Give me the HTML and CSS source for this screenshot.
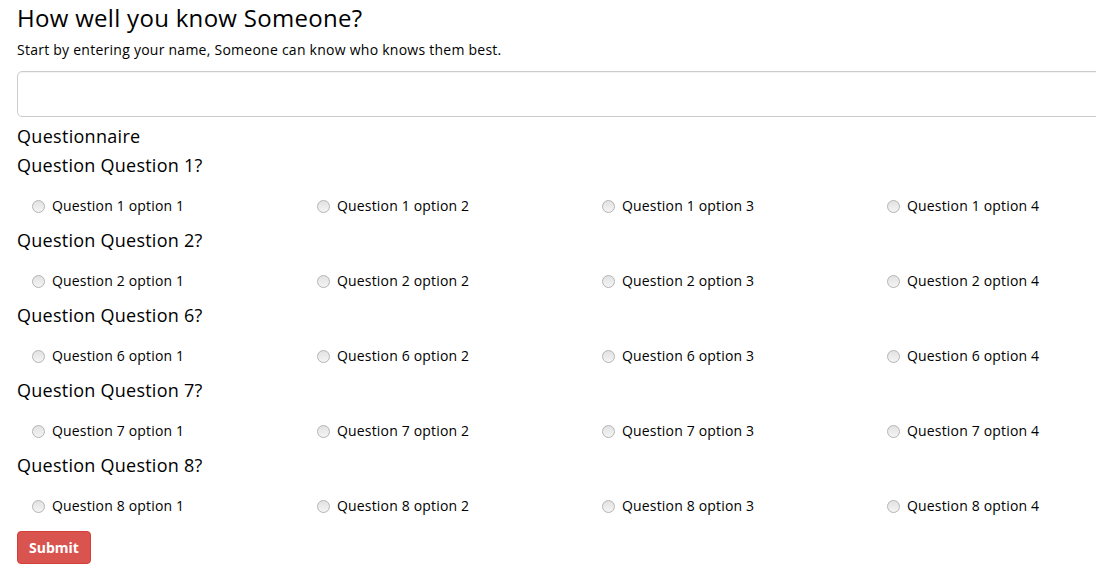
FILE: index.html
```html
<!DOCTYPE html>
<html lang="en">
<head>
<meta charset="utf-8">
<title>How well you know Someone?</title>
<link rel="stylesheet" href="styles.css">
</head>
<body>
<div class="page">
  <h1 class="title">How well you know Someone?</h1>
  <p class="subtitle">Start by entering your name, Someone can know who knows them best.</p>
  <input class="name-input" type="text">
  <h3 class="section">Questionnaire</h3>

  <div class="question">
    <h4 class="q-title">Question Question 1?</h4>
    <div class="options">
      <label class="option"><input type="radio" name="q1"><span>Question 1 option 1</span></label>
      <label class="option"><input type="radio" name="q1"><span>Question 1 option 2</span></label>
      <label class="option"><input type="radio" name="q1"><span>Question 1 option 3</span></label>
      <label class="option"><input type="radio" name="q1"><span>Question 1 option 4</span></label>
    </div>
  </div>

  <div class="question">
    <h4 class="q-title">Question Question 2?</h4>
    <div class="options">
      <label class="option"><input type="radio" name="q2"><span>Question 2 option 1</span></label>
      <label class="option"><input type="radio" name="q2"><span>Question 2 option 2</span></label>
      <label class="option"><input type="radio" name="q2"><span>Question 2 option 3</span></label>
      <label class="option"><input type="radio" name="q2"><span>Question 2 option 4</span></label>
    </div>
  </div>

  <div class="question">
    <h4 class="q-title">Question Question 6?</h4>
    <div class="options">
      <label class="option"><input type="radio" name="q6"><span>Question 6 option 1</span></label>
      <label class="option"><input type="radio" name="q6"><span>Question 6 option 2</span></label>
      <label class="option"><input type="radio" name="q6"><span>Question 6 option 3</span></label>
      <label class="option"><input type="radio" name="q6"><span>Question 6 option 4</span></label>
    </div>
  </div>

  <div class="question">
    <h4 class="q-title">Question Question 7?</h4>
    <div class="options">
      <label class="option"><input type="radio" name="q7"><span>Question 7 option 1</span></label>
      <label class="option"><input type="radio" name="q7"><span>Question 7 option 2</span></label>
      <label class="option"><input type="radio" name="q7"><span>Question 7 option 3</span></label>
      <label class="option"><input type="radio" name="q7"><span>Question 7 option 4</span></label>
    </div>
  </div>

  <div class="question">
    <h4 class="q-title">Question Question 8?</h4>
    <div class="options">
      <label class="option"><input type="radio" name="q8"><span>Question 8 option 1</span></label>
      <label class="option"><input type="radio" name="q8"><span>Question 8 option 2</span></label>
      <label class="option"><input type="radio" name="q8"><span>Question 8 option 3</span></label>
      <label class="option"><input type="radio" name="q8"><span>Question 8 option 4</span></label>
    </div>
  </div>

  <button class="submit" type="button">Submit</button>
</div>
</body>
</html>
```

FILE: styles.css
```css
html, body {
  margin: 0;
  padding: 0;
  background: #fff;
  overflow: hidden;
}

body {
  font-family: "Open Sans", "Liberation Sans", sans-serif;
  color: #000;
}

.page {
  width: 1140px;
  padding: 0 17px;
}

.title {
  margin: 3px 0 0;
  font-size: 24px;
  line-height: 30px;
  font-weight: 400;
  letter-spacing: 0.3px;
}

.subtitle {
  margin: 7px 0 0;
  font-size: 14px;
  line-height: 20px;
  letter-spacing: 0.25px;
}

.name-input {
  display: block;
  box-sizing: border-box;
  margin: 11px 0 0;
  width: 1140px;
  height: 46px;
  border: 1px solid #ccc;
  border-radius: 5px;
  padding: 6px 12px;
  font: inherit;
  background: #fff;
  box-shadow: inset 0 1px 1px rgba(0, 0, 0, 0.05);
}

.section {
  margin: 7px 0 0;
  font-size: 18px;
  line-height: 24px;
  font-weight: 400;
  letter-spacing: 0.3px;
}

.q-title {
  margin: 5px 0 0;
  font-size: 18px;
  line-height: 24px;
  font-weight: 400;
  letter-spacing: 0.25px;
}

.question + .question .q-title {
  margin-top: 12px;
}

.options {
  display: grid;
  grid-template-columns: repeat(4, 285px);
  margin-top: 19px;
}

.option {
  display: flex;
  align-items: center;
  padding-left: 15px;
  font-size: 14px;
  line-height: 20px;
  height: 20px;
  letter-spacing: 0.17px;
}

.option input {
  -webkit-appearance: none;
  appearance: none;
  box-sizing: border-box;
  width: 13px;
  height: 13px;
  margin: 1px 7px 0 0;
  border: 1px solid #b4b4b4;
  border-radius: 50%;
  background: linear-gradient(#e2e2e2, #f4f4f4);
  flex: none;
}

.submit {
  display: block;
  margin-top: 15px;
  box-sizing: border-box;
  height: 33px;
  padding: 0 11px;
  border: 1px solid #d43f3a;
  border-radius: 4px;
  background: #d9534f;
  color: #fff;
  font-family: "Open Sans", "Liberation Sans", sans-serif;
  font-size: 14px;
  font-weight: 700;
  line-height: 19px;
}
```
